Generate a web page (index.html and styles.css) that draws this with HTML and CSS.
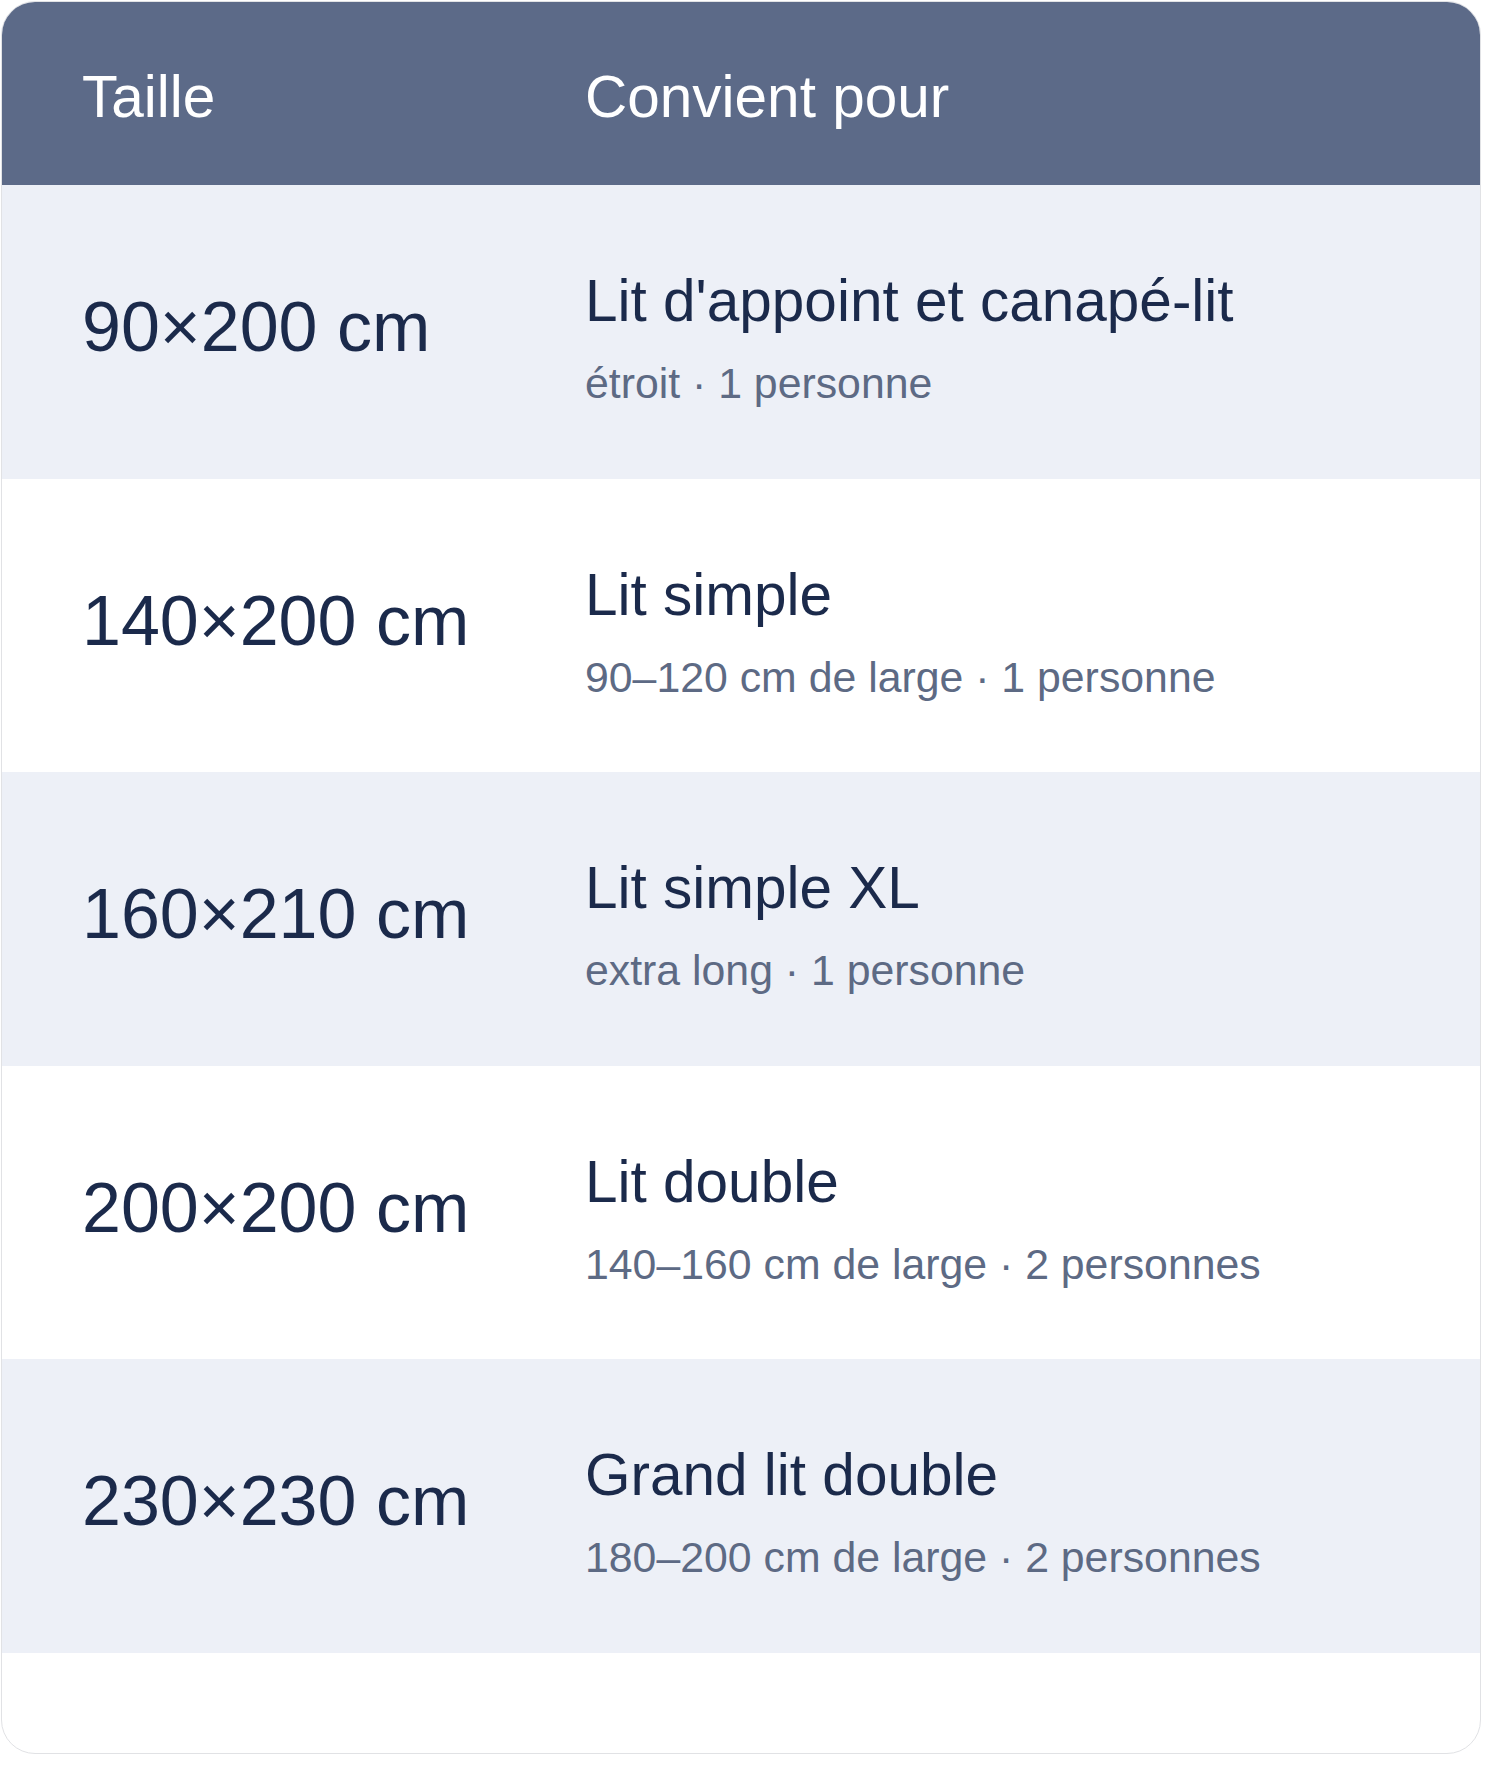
FILE: index.html
```html
<!DOCTYPE html>
<html lang="fr">
<head>
<meta charset="utf-8">
<title>Tailles</title>
<link rel="stylesheet" href="styles.css">
</head>
<body>
<div class="card">
  <div class="thead">
    <div class="th">Taille</div>
    <div class="th">Convient pour</div>
  </div>
  <div class="row alt">
    <div class="size">90×200 cm</div>
    <div class="use"><div class="title">Lit d'appoint et canapé-lit</div><div class="sub">étroit · 1 personne</div></div>
  </div>
  <div class="row">
    <div class="size">140×200 cm</div>
    <div class="use"><div class="title">Lit simple</div><div class="sub">90–120 cm de large · 1 personne</div></div>
  </div>
  <div class="row alt">
    <div class="size">160×210 cm</div>
    <div class="use"><div class="title">Lit simple XL</div><div class="sub">extra long · 1 personne</div></div>
  </div>
  <div class="row">
    <div class="size">200×200 cm</div>
    <div class="use"><div class="title">Lit double</div><div class="sub">140–160 cm de large · 2 personnes</div></div>
  </div>
  <div class="row alt">
    <div class="size">230×230 cm</div>
    <div class="use"><div class="title">Grand lit double</div><div class="sub">180–200 cm de large · 2 personnes</div></div>
  </div>
</div>
</body>
</html>
```
FILE: styles.css
```css
html, body {
  margin: 0;
  padding: 0;
  background: #ffffff;
}
body {
  font-family: "Liberation Sans", Arial, Helvetica, sans-serif;
}
.card {
  box-sizing: border-box;
  margin: 1px;
  width: 1480px;
  height: 1753px;
  border: 1px solid #e1e2e5;
  border-radius: 34px;
  overflow: hidden;
  background: #ffffff;
}
.thead {
  display: grid;
  grid-template-columns: 503px 1fr;
  height: 183px;
  background: #5c6a88;
  color: #ffffff;
  box-sizing: border-box;
  padding-top: 62px;
}
.th {
  padding-left: 80px;
  font-size: 58.5px;
  line-height: 66px;
}
.row {
  display: grid;
  grid-template-columns: 503px 1fr;
  align-items: start;
  height: 293.6px;
  background: #ffffff;
}
.row.alt {
  background: #edf0f7;
}
.size {
  padding-left: 80px;
  padding-top: 102px;
  font-size: 70px;
  line-height: 80px;
  color: #1b2a4b;
}
.use {
  padding-left: 80px;
  padding-top: 83px;
}
.title {
  font-size: 58.5px;
  line-height: 66px;
  color: #1b2a4b;
}
.sub {
  margin-top: 24px;
  font-size: 42.8px;
  line-height: 50px;
  color: #5d6a84;
}
```
